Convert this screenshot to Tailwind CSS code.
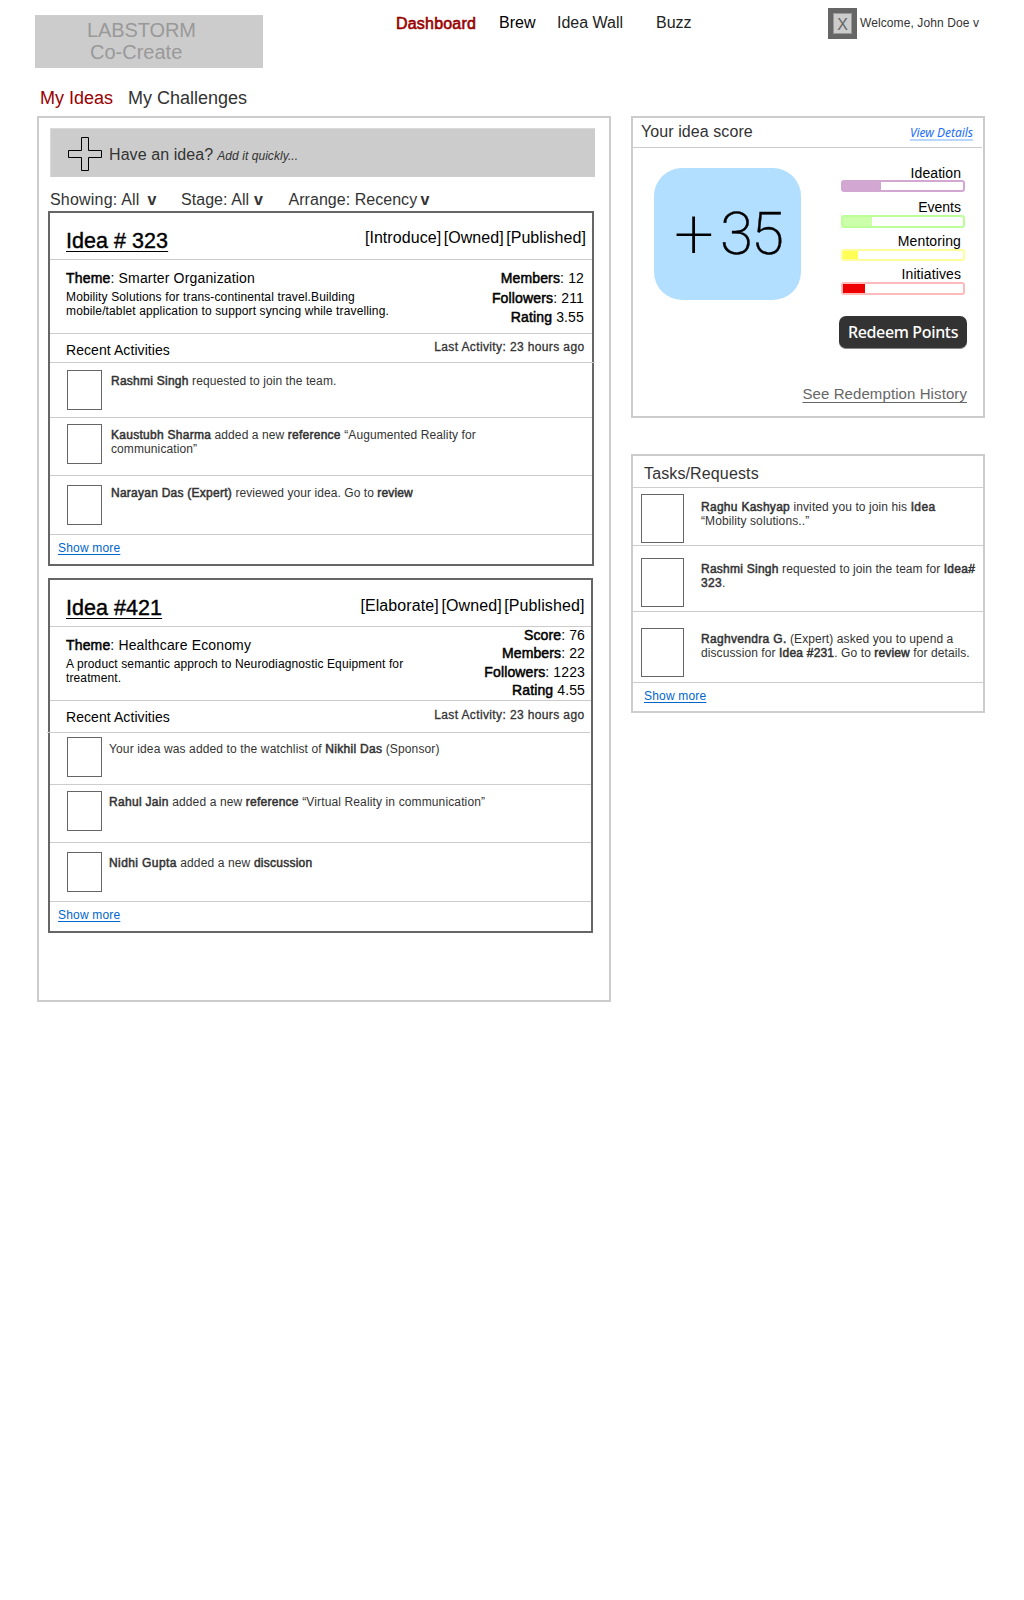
<!DOCTYPE html>
<html lang="en">
<head>
<meta charset="utf-8">
<title>Labstorm Co-Create</title>
<script src="https://cdn.jsdelivr.net/npm/@tailwindcss/browser@4"></script>
</head>
<body class="bg-white h-[1600px] w-[1024px] overflow-hidden font-['Liberation_Sans',Arial,sans-serif] text-[12px] leading-[14px] text-[#333]">

<header class="flex h-[68px] items-start">
  <div class="ml-[35px] mt-[15px] h-[53px] w-[228px] bg-[#ccc] pt-1 text-[20px] leading-[22px] text-[#999]">
    <div class="pl-[52px] tracking-[-0.1px]">LABSTORM</div>
    <div class="pl-[55px]">Co-Create</div>
  </div>
  <nav class="ml-[133px] mt-[14px] flex w-[432px] text-[16px] leading-[18px] text-[#222]">
    <a class="mt-px w-[103px] tracking-[0.2px] text-[#900] [-webkit-text-stroke:0.6px_#900]">Dashboard</a>
    <a class="w-[58px] text-black">Brew</a>
    <a class="w-[99px]">Idea Wall</a>
    <a>Buzz</a>
  </nav>
  <div class="mt-2 flex">
    <div class="h-[31px] w-[29px] bg-[#666] p-[5px]">
      <div class="h-[21px] w-[19px] border border-[#999] bg-[#ccc] pt-[2px] text-center text-[16px] leading-[18px] text-[#666]">X</div>
    </div>
    <div class="ml-[3px] mt-2 whitespace-nowrap tracking-[0.1px]">Welcome, John Doe v</div>
  </div>
</header>

<div class="flex h-[48px] gap-[15px] pl-[40px] pt-[20px] text-[18px] leading-[20px]">
  <a class="text-[#900]">My Ideas</a>
  <a>My Challenges</a>
</div>

<main class="flex items-start gap-5 pl-[37px]">
  <section class="h-[886px] w-[574px] border-2 border-[#ccc] pt-[10px]">
    <div class="ml-[11px] flex h-[49px] w-[545px] items-start border-l border-t border-[#d9d9d9] bg-[#ccc]">
      <svg class="ml-[17px] mt-2 h-[34px] w-[34px]" viewBox="0 0 34 34" fill="none" stroke="#000"><path d="M13.5 .5h7v13h13v7h-13v13h-7v-13h-13v-7h13z"/></svg>
      <div class="ml-[7px] mt-[17px] text-[16px] leading-[18px] tracking-[0.08px]">Have an idea?</div>
      <div class="ml-[4px] mt-[20px] italic tracking-[0.06px]">Add it quickly...</div>
    </div>
    <div class="flex h-[34px] pl-[11px] pt-[14px] text-[16px] leading-[18px]">
      <div class="w-[97.5px] tracking-[0.2px]">Showing: All</div><div class="w-[33.5px] font-bold">v</div>
      <div class="w-[73px] tracking-[0.05px]">Stage: All</div><div class="w-[34.5px] font-bold">v</div>
      <div class="w-[132px] tracking-[0.04px]">Arrange: Recency</div><div class="font-bold">v</div>
    </div>

    <article class="ml-[9px] flex h-[355px] w-[546px] flex-col border-2 border-[#666]">
      <div class="flex h-[47px] shrink-0 justify-between border-b border-[#ccc] pl-4 pr-[6px] text-black">
        <h2 class="mt-[17px] text-[21.5px] leading-[22px] tracking-[0.05px] underline decoration-1 underline-offset-[3px] [-webkit-text-stroke:0.4px]">Idea # 323</h2>
        <div class="mt-[16px] text-[16px] leading-[18px] tracking-[0.06px] [word-spacing:-2px]">[Introduce] [Owned] [Published]</div>
      </div>
      <div class="flex h-[74px] shrink-0 justify-between border-b border-[#ccc] pl-4 pr-2 text-black">
        <div class="pt-[10px]">
          <div class="text-[14px] leading-4 tracking-[0.17px]"><span class="[-webkit-text-stroke:0.5px]">Theme</span>: Smarter Organization</div>
          <div class="mt-1 w-[360px] tracking-[0.13px]">Mobility Solutions for trans-continental travel.Building<br>mobile/tablet application to support syncing while travelling.</div>
        </div>
        <div class="pt-[10px] text-right text-[14px] leading-4 tracking-[0.15px]">
          <div><span class="[-webkit-text-stroke:0.5px]">Members</span>: 12</div>
          <div class="mt-1"><span class="[-webkit-text-stroke:0.5px]">Followers</span>: 211</div>
          <div class="mt-[3px]"><span class="[-webkit-text-stroke:0.5px]">Rating</span> 3.55</div>
        </div>
      </div>
      <div class="flex h-[29px] w-[545px] shrink-0 justify-between border-b border-[#ccc] pl-4 pr-[10.5px]">
        <div class="mt-2 text-[14px] leading-4 tracking-[0.07px] text-black">Recent Activities</div>
        <div class="mt-[6px] tracking-[0.38px] [-webkit-text-stroke:0.3px]">Last Activity: 23 hours ago</div>
      </div>
      <div class="flex h-[55px] shrink-0 border-b border-[#ccc] pl-[17px] pt-[7px]">
        <div class="h-10 w-[35px] border border-[#666]"></div>
        <p class="ml-[9px] mt-[4px] tracking-[0.08px]"><span class="tracking-[0.25px] [-webkit-text-stroke:0.5px]">Rashmi Singh</span> requested to join the team.</p>
      </div>
      <div class="flex h-[58px] shrink-0 border-b border-[#ccc] pl-[17px] pt-[6px]">
        <div class="h-10 w-[35px] border border-[#666]"></div>
        <p class="ml-[9px] mt-[4px] tracking-[0.1px]"><span class="tracking-[0.27px] [-webkit-text-stroke:0.5px]">Kaustubh Sharma</span> added a new <span class="tracking-[0.25px] [-webkit-text-stroke:0.5px]">reference</span> “Augumented Reality for<br>communication”</p>
      </div>
      <div class="flex h-[59px] shrink-0 border-b border-[#ccc] pl-[17px] pt-[9px]">
        <div class="h-10 w-[35px] border border-[#666]"></div>
        <p class="ml-[9px] mt-[1px] tracking-[0.07px]"><span class="tracking-[0.25px] [-webkit-text-stroke:0.5px]">Narayan Das (Expert)</span> reviewed your idea. Go to <span class="tracking-[0.15px] [-webkit-text-stroke:0.5px]">review</span></p>
      </div>
      <div class="pl-2 pt-[6px]"><a class="tracking-[0.18px] text-[#06c] underline decoration-1 underline-offset-2">Show more</a></div>
    </article>

    <article class="ml-[9px] mt-3 flex h-[355px] w-[545px] flex-col border-2 border-[#666]">
      <div class="flex h-[47px] shrink-0 justify-between border-b border-[#ccc] pl-4 pr-[6.5px] text-black">
        <h2 class="mt-[17px] text-[21.5px] leading-[22px] tracking-[0.05px] underline decoration-1 underline-offset-[3px] [-webkit-text-stroke:0.4px]">Idea #421</h2>
        <div class="mt-[17px] text-[16px] leading-[18px] tracking-[0.1px] [word-spacing:-2px]">[Elaborate] [Owned] [Published]</div>
      </div>
      <div class="flex h-[74px] shrink-0 justify-between border-b border-[#ccc] pl-4 pr-[6px] text-black">
        <div class="pt-[10px]">
          <div class="text-[14px] leading-4 tracking-[0.15px]"><span class="[-webkit-text-stroke:0.5px]">Theme</span>: Healthcare Economy</div>
          <div class="mt-1 w-[360px] tracking-[0.12px]">A product semantic approch to Neurodiagnostic Equipment for<br>treatment.</div>
        </div>
        <div class="text-right text-[14px] leading-4 tracking-[0.12px]">
          <div><span class="[-webkit-text-stroke:0.5px]">Score</span>: 76</div>
          <div class="mt-[2px]"><span class="[-webkit-text-stroke:0.5px]">Members</span>: 22</div>
          <div class="mt-[3px]"><span class="[-webkit-text-stroke:0.5px]">Followers</span>: 1223</div>
          <div class="mt-[2px]"><span class="[-webkit-text-stroke:0.5px]">Rating</span> 4.55</div>
        </div>
      </div>
      <div class="-ml-[3px] flex h-[32px] w-[543px] shrink-0 justify-between border-b border-[#ccc] pl-[19px] pr-[5.5px]">
        <div class="mt-2 text-[14px] leading-4 tracking-[0.07px] text-black">Recent Activities</div>
        <div class="mt-[7px] tracking-[0.38px] [-webkit-text-stroke:0.3px]">Last Activity: 23 hours ago</div>
      </div>
      <div class="flex h-[52px] shrink-0 border-b border-[#ccc] pl-[17px] pt-[4px]">
        <div class="h-10 w-[35px] border border-[#666]"></div>
        <p class="ml-[7px] mt-[5px] tracking-[0.13px]">Your idea was added to the watchlist of <span class="tracking-[0.3px] [-webkit-text-stroke:0.5px]">Nikhil Das</span> (Sponsor)</p>
      </div>
      <div class="flex h-[58px] shrink-0 border-b border-[#ccc] pl-[17px] pt-[6px]">
        <div class="h-10 w-[35px] border border-[#666]"></div>
        <p class="ml-[7px] mt-[4px] tracking-[0.13px]"><span class="tracking-[0.3px] [-webkit-text-stroke:0.5px]">Rahul Jain</span> added a new <span class="tracking-[0.25px] [-webkit-text-stroke:0.5px]">reference</span> “Virtual Reality in communication”</p>
      </div>
      <div class="flex h-[59px] shrink-0 border-b border-[#ccc] pl-[17px] pt-[9px]">
        <div class="h-10 w-[35px] border border-[#666]"></div>
        <p class="ml-[7px] mt-[4px] tracking-[0.13px]"><span class="tracking-[0.4px] [-webkit-text-stroke:0.5px]">Nidhi Gupta</span> added a new <span class="tracking-[0.25px] [-webkit-text-stroke:0.5px]">discussion</span></p>
      </div>
      <div class="pl-2 pt-[6px]"><a class="tracking-[0.18px] text-[#06c] underline decoration-1 underline-offset-2">Show more</a></div>
    </article>
  </section>

  <aside class="w-[354px]">
    <section class="h-[302px] border-2 border-[#ccc]">
      <div class="flex h-[30px] w-[349px] justify-between border-b border-[#ccc] pl-2 pr-[9px]">
        <h3 class="mt-[5px] text-[16px] leading-[18px] tracking-[0.08px]">Your idea score</h3>
        <a class="mt-2 h-[15px] border-b-2 border-[#b9d7ff] font-['Noto_Sans','Open_Sans',sans-serif] text-[12px] italic leading-[14px] tracking-[-0.03px] text-[#1a6df5]">View Details</a>
      </div>
      <div class="flex h-[207px] items-start pt-5">
        <div class="ml-[21px] flex h-[132px] w-[147px] items-center rounded-[28px] bg-[#b2dfff] pl-[20px] font-['Roboto',sans-serif] text-[60px] font-extralight leading-[60px] text-black"><span class="w-[46px] text-[71px]">+</span><span class="tracking-[-2px] [-webkit-text-stroke:0.4px]">35</span></div>
        <div class="ml-[38px] w-[128px] text-right text-[14px] leading-4 text-black">
          <div class="-mt-[3px] flex flex-col items-end pl-[2px] pr-[2px]">
            <div class="pr-1 tracking-[0.07px]">Ideation</div>
            <div class="-mt-px h-3 w-[124px] rounded-[3px] border-2 border-[#d2a8d2]"><div class="h-full bg-[#d2a8d2]" style="width:38px"></div></div>
            <div class="mt-[7px] pr-1">Events</div>
            <div class="h-[13px] w-[124px] rounded-[3px] border-2 border-[#bf9]"><div class="h-full bg-[#cfa]" style="width:29px"></div></div>
            <div class="mt-[5px] pr-1 tracking-[0.1px]">Mentoring</div>
            <div class="h-3 w-[124px] rounded-[3px] border-2 border-[#ff9]"><div class="h-full bg-[#ff5]" style="width:15px"></div></div>
            <div class="mt-[5px] pr-1 tracking-[0.1px]">Initiatives</div>
            <div class="h-[13px] w-[124px] rounded-[3px] border-2 border-[#fbb]"><div class="h-full bg-[#e00]" style="width:22px"></div></div>
          </div>
          <button class="mt-[21px] h-[33px] w-[128px] whitespace-nowrap rounded-[7px] border-b border-[#888] bg-[#333] text-center font-['Noto_Sans','Open_Sans',sans-serif] text-[16px] font-medium leading-8 tracking-[-0.35px] text-white">Redeem Points</button>
        </div>
      </div>
      <div class="mr-4 mt-[30px] text-right text-[15px] leading-[18px] tracking-[0.09px] text-[#666] underline decoration-1 underline-offset-[3px]">See Redemption History</div>
    </section>

    <section class="mt-9 h-[259px] border-2 border-[#ccc]">
      <h3 class="h-8 border-b border-[#ccc] pl-[11px] pt-[9px] text-[16px] leading-[18px] tracking-[0.13px]">Tasks/Requests</h3>
      <div class="flex h-[58px] border-b border-[#ccc] pl-2 pt-[6px]">
        <div class="h-[49px] w-[43px] shrink-0 border border-[#666]"></div>
        <p class="ml-[17px] mt-[6px] whitespace-nowrap tracking-[0.1px]"><span class="tracking-[0.28px] [-webkit-text-stroke:0.5px]">Raghu Kashyap</span> invited you to join his <span class="tracking-[0.4px] [-webkit-text-stroke:0.5px]">Idea</span><br>“Mobility solutions..”</p>
      </div>
      <div class="flex h-[66px] border-b border-[#ccc] pl-2 pt-[12px]">
        <div class="h-[49px] w-[43px] shrink-0 border border-[#666]"></div>
        <p class="ml-[17px] mt-[4px] whitespace-nowrap tracking-[0.07px]"><span class="tracking-[0.25px] [-webkit-text-stroke:0.5px]">Rashmi Singh</span> requested to join the team for <span class="tracking-[0.3px] [-webkit-text-stroke:0.5px]">Idea#<br>323</span>.</p>
      </div>
      <div class="flex h-[71px] border-b border-[#ccc] pl-2 pt-[16px]">
        <div class="h-[49px] w-[43px] shrink-0 border border-[#666]"></div>
        <p class="ml-[17px] mt-[4px] whitespace-nowrap tracking-[0.09px]"><span class="tracking-[0.32px] [-webkit-text-stroke:0.5px]">Raghvendra G.</span> (Expert) asked you to upend a<br>discussion for <span class="tracking-[0.2px] [-webkit-text-stroke:0.5px]">Idea #231</span>. Go to <span class="tracking-[0.15px] [-webkit-text-stroke:0.5px]">review</span> for details.</p>
      </div>
      <div class="pl-[11px] pt-[6px]"><a class="tracking-[0.18px] text-[#06c] underline decoration-1 underline-offset-2">Show more</a></div>
    </section>
  </aside>
</main>
</body>
</html>
